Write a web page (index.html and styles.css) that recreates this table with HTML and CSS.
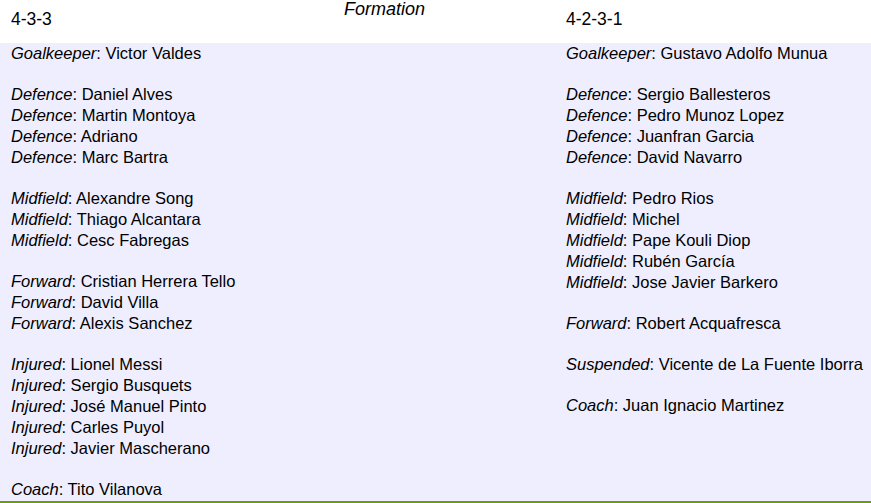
FILE: index.html
```html
<!DOCTYPE html>
<html>
<head>
<meta charset="utf-8">
<link rel="stylesheet" href="styles.css">
</head>
<body>
<div class="page">
  <div class="head">
    <div class="head-left">4-3-3</div>
    <div class="head-mid">Formation</div>
    <div class="head-right">4-2-3-1</div>
  </div>
  <div class="lineups">
    <div class="team team-left">
      <div class="group">
        <div class="row"><i>Goalkeeper</i>: Victor Valdes</div>
      </div>
      <div class="group">
        <div class="row"><i>Defence</i>: Daniel Alves</div>
        <div class="row"><i>Defence</i>: Martin Montoya</div>
        <div class="row"><i>Defence</i>: Adriano</div>
        <div class="row"><i>Defence</i>: Marc Bartra</div>
      </div>
      <div class="group">
        <div class="row"><i>Midfield</i>: Alexandre Song</div>
        <div class="row"><i>Midfield</i>: Thiago Alcantara</div>
        <div class="row"><i>Midfield</i>: Cesc Fabregas</div>
      </div>
      <div class="group">
        <div class="row"><i>Forward</i>: Cristian Herrera Tello</div>
        <div class="row"><i>Forward</i>: David Villa</div>
        <div class="row"><i>Forward</i>: Alexis Sanchez</div>
      </div>
      <div class="group">
        <div class="row"><i>Injured</i>: Lionel Messi</div>
        <div class="row"><i>Injured</i>: Sergio Busquets</div>
        <div class="row"><i>Injured</i>: José Manuel Pinto</div>
        <div class="row"><i>Injured</i>: Carles Puyol</div>
        <div class="row"><i>Injured</i>: Javier Mascherano</div>
      </div>
      <div class="group">
        <div class="row"><i>Coach</i>: Tito Vilanova</div>
      </div>
    </div>
    <div class="team team-right">
      <div class="group">
        <div class="row"><i>Goalkeeper</i>: Gustavo Adolfo Munua</div>
      </div>
      <div class="group">
        <div class="row"><i>Defence</i>: Sergio Ballesteros</div>
        <div class="row"><i>Defence</i>: Pedro Munoz Lopez</div>
        <div class="row"><i>Defence</i>: Juanfran Garcia</div>
        <div class="row"><i>Defence</i>: David Navarro</div>
      </div>
      <div class="group">
        <div class="row"><i>Midfield</i>: Pedro Rios</div>
        <div class="row"><i>Midfield</i>: Michel</div>
        <div class="row"><i>Midfield</i>: Pape Kouli Diop</div>
        <div class="row"><i>Midfield</i>: Rubén García</div>
        <div class="row"><i>Midfield</i>: Jose Javier Barkero</div>
      </div>
      <div class="group">
        <div class="row"><i>Forward</i>: Robert Acquafresca</div>
      </div>
      <div class="group">
        <div class="row"><i>Suspended</i>: Vicente de La Fuente Iborra</div>
      </div>
      <div class="group">
        <div class="row"><i>Coach</i>: Juan Ignacio Martinez</div>
      </div>
    </div>
  </div>
</div>
</body>
</html>
```
FILE: styles.css
```css
html, body {
  margin: 0;
  padding: 0;
  background: #ffffff;
}
body {
  font-family: "Liberation Sans", Arial, sans-serif;
  font-size: 16.5px;
  color: #000000;
}
.page {
  width: 871px;
}
.head {
  display: flex;
  height: 43px;
  background: #ffffff;
}
.head-left {
  width: 555px;
  padding-left: 11px;
  padding-top: 9px;
  font-size: 17.5px;
  line-height: 21px;
  box-sizing: border-box;
  position: relative;
}
.head-mid {
  position: absolute;
  left: 344px;
  top: 0;
  font-style: italic;
  font-size: 18px;
  line-height: 19px;
}
.head-right {
  padding-left: 11px;
  padding-top: 9px;
  font-size: 17.5px;
  line-height: 21px;
}
.lineups {
  display: flex;
  background: #eeeeff;
  border-bottom: 2px solid #66a000;
  height: 458px;
}
.team-left {
  width: 555px;
  padding-left: 11px;
  box-sizing: border-box;
}
.team-right {
  padding-left: 11px;
}
.group + .group {
  margin-top: 20px;
}
.row {
  line-height: 21px;
  white-space: nowrap;
}
.row i {
  font-style: italic;
}
```
